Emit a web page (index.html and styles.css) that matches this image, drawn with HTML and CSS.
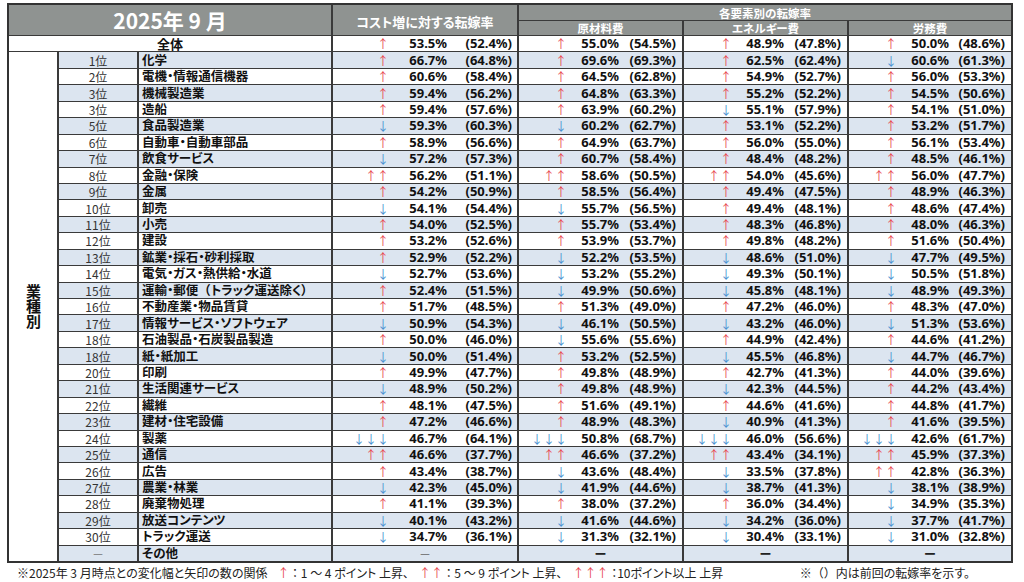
FILE: index.html
```html
<!DOCTYPE html>
<html lang="ja">
<head>
<meta charset="utf-8">
<title>2025年9月 転嫁率</title>
<link rel="stylesheet" href="styles.css">
</head>
<body>
<div class="page">
<div class="tbl">
<div class="h h-title">2025年 9 月</div>
<div class="h h-cost">コスト増に対する転嫁率</div>
<div class="h h-group">各要素別の転嫁率</div>
<div class="h h-sub">原材料費</div>
<div class="h h-sub">エネルギー費</div>
<div class="h h-sub">労務費</div>

<div class="all">全体</div>
<div class="v"><span class="a u">↑</span><span class="n">53.5%</span><span class="p">(52.4%)</span></div>
<div class="v s"><span class="a u">↑</span><span class="n">55.0%</span><span class="p">(54.5%)</span></div>
<div class="v s"><span class="a u">↑</span><span class="n">48.9%</span><span class="p">(47.8%)</span></div>
<div class="v s"><span class="a u">↑</span><span class="n">50.0%</span><span class="p">(48.6%)</span></div>

<div class="cat">業種別</div>

<div class="r b">1位</div><div class="nm b">化学</div>
<div class="v b"><span class="a u">↑</span><span class="n">66.7%</span><span class="p">(64.8%)</span></div>
<div class="v s b"><span class="a u">↑</span><span class="n">69.6%</span><span class="p">(69.3%)</span></div>
<div class="v s b"><span class="a u">↑</span><span class="n">62.5%</span><span class="p">(62.4%)</span></div>
<div class="v s b"><span class="a d">↓</span><span class="n">60.6%</span><span class="p">(61.3%)</span></div>

<div class="r">2位</div><div class="nm">電機・情報通信機器</div>
<div class="v"><span class="a u">↑</span><span class="n">60.6%</span><span class="p">(58.4%)</span></div>
<div class="v s"><span class="a u">↑</span><span class="n">64.5%</span><span class="p">(62.8%)</span></div>
<div class="v s"><span class="a u">↑</span><span class="n">54.9%</span><span class="p">(52.7%)</span></div>
<div class="v s"><span class="a u">↑</span><span class="n">56.0%</span><span class="p">(53.3%)</span></div>

<div class="r b">3位</div><div class="nm b">機械製造業</div>
<div class="v b"><span class="a u">↑</span><span class="n">59.4%</span><span class="p">(56.2%)</span></div>
<div class="v s b"><span class="a u">↑</span><span class="n">64.8%</span><span class="p">(63.3%)</span></div>
<div class="v s b"><span class="a u">↑</span><span class="n">55.2%</span><span class="p">(52.2%)</span></div>
<div class="v s b"><span class="a u">↑</span><span class="n">54.5%</span><span class="p">(50.6%)</span></div>

<div class="r">3位</div><div class="nm">造船</div>
<div class="v"><span class="a u">↑</span><span class="n">59.4%</span><span class="p">(57.6%)</span></div>
<div class="v s"><span class="a u">↑</span><span class="n">63.9%</span><span class="p">(60.2%)</span></div>
<div class="v s"><span class="a d">↓</span><span class="n">55.1%</span><span class="p">(57.9%)</span></div>
<div class="v s"><span class="a u">↑</span><span class="n">54.1%</span><span class="p">(51.0%)</span></div>

<div class="r b">5位</div><div class="nm b">食品製造業</div>
<div class="v b"><span class="a d">↓</span><span class="n">59.3%</span><span class="p">(60.3%)</span></div>
<div class="v s b"><span class="a d">↓</span><span class="n">60.2%</span><span class="p">(62.7%)</span></div>
<div class="v s b"><span class="a u">↑</span><span class="n">53.1%</span><span class="p">(52.2%)</span></div>
<div class="v s b"><span class="a u">↑</span><span class="n">53.2%</span><span class="p">(51.7%)</span></div>

<div class="r">6位</div><div class="nm">自動車・自動車部品</div>
<div class="v"><span class="a u">↑</span><span class="n">58.9%</span><span class="p">(56.6%)</span></div>
<div class="v s"><span class="a u">↑</span><span class="n">64.9%</span><span class="p">(63.7%)</span></div>
<div class="v s"><span class="a u">↑</span><span class="n">56.0%</span><span class="p">(55.0%)</span></div>
<div class="v s"><span class="a u">↑</span><span class="n">56.1%</span><span class="p">(53.4%)</span></div>

<div class="r b">7位</div><div class="nm b">飲食サービス</div>
<div class="v b"><span class="a d">↓</span><span class="n">57.2%</span><span class="p">(57.3%)</span></div>
<div class="v s b"><span class="a u">↑</span><span class="n">60.7%</span><span class="p">(58.4%)</span></div>
<div class="v s b"><span class="a u">↑</span><span class="n">48.4%</span><span class="p">(48.2%)</span></div>
<div class="v s b"><span class="a u">↑</span><span class="n">48.5%</span><span class="p">(46.1%)</span></div>

<div class="r">8位</div><div class="nm">金融・保険</div>
<div class="v"><span class="a u">↑↑</span><span class="n">56.2%</span><span class="p">(51.1%)</span></div>
<div class="v s"><span class="a u">↑↑</span><span class="n">58.6%</span><span class="p">(50.5%)</span></div>
<div class="v s"><span class="a u">↑↑</span><span class="n">54.0%</span><span class="p">(45.6%)</span></div>
<div class="v s"><span class="a u">↑↑</span><span class="n">56.0%</span><span class="p">(47.7%)</span></div>

<div class="r b">9位</div><div class="nm b">金属</div>
<div class="v b"><span class="a u">↑</span><span class="n">54.2%</span><span class="p">(50.9%)</span></div>
<div class="v s b"><span class="a u">↑</span><span class="n">58.5%</span><span class="p">(56.4%)</span></div>
<div class="v s b"><span class="a u">↑</span><span class="n">49.4%</span><span class="p">(47.5%)</span></div>
<div class="v s b"><span class="a u">↑</span><span class="n">48.9%</span><span class="p">(46.3%)</span></div>

<div class="r">10位</div><div class="nm">卸売</div>
<div class="v"><span class="a d">↓</span><span class="n">54.1%</span><span class="p">(54.4%)</span></div>
<div class="v s"><span class="a d">↓</span><span class="n">55.7%</span><span class="p">(56.5%)</span></div>
<div class="v s"><span class="a u">↑</span><span class="n">49.4%</span><span class="p">(48.1%)</span></div>
<div class="v s"><span class="a u">↑</span><span class="n">48.6%</span><span class="p">(47.4%)</span></div>

<div class="r b">11位</div><div class="nm b">小売</div>
<div class="v b"><span class="a u">↑</span><span class="n">54.0%</span><span class="p">(52.5%)</span></div>
<div class="v s b"><span class="a u">↑</span><span class="n">55.7%</span><span class="p">(53.4%)</span></div>
<div class="v s b"><span class="a u">↑</span><span class="n">48.3%</span><span class="p">(46.8%)</span></div>
<div class="v s b"><span class="a u">↑</span><span class="n">48.0%</span><span class="p">(46.3%)</span></div>

<div class="r">12位</div><div class="nm">建設</div>
<div class="v"><span class="a u">↑</span><span class="n">53.2%</span><span class="p">(52.6%)</span></div>
<div class="v s"><span class="a u">↑</span><span class="n">53.9%</span><span class="p">(53.7%)</span></div>
<div class="v s"><span class="a u">↑</span><span class="n">49.8%</span><span class="p">(48.2%)</span></div>
<div class="v s"><span class="a u">↑</span><span class="n">51.6%</span><span class="p">(50.4%)</span></div>

<div class="r b">13位</div><div class="nm b">鉱業・採石・砂利採取</div>
<div class="v b"><span class="a u">↑</span><span class="n">52.9%</span><span class="p">(52.2%)</span></div>
<div class="v s b"><span class="a d">↓</span><span class="n">52.2%</span><span class="p">(53.5%)</span></div>
<div class="v s b"><span class="a d">↓</span><span class="n">48.6%</span><span class="p">(51.0%)</span></div>
<div class="v s b"><span class="a d">↓</span><span class="n">47.7%</span><span class="p">(49.5%)</span></div>

<div class="r">14位</div><div class="nm">電気・ガス・熱供給・水道</div>
<div class="v"><span class="a d">↓</span><span class="n">52.7%</span><span class="p">(53.6%)</span></div>
<div class="v s"><span class="a d">↓</span><span class="n">53.2%</span><span class="p">(55.2%)</span></div>
<div class="v s"><span class="a d">↓</span><span class="n">49.3%</span><span class="p">(50.1%)</span></div>
<div class="v s"><span class="a d">↓</span><span class="n">50.5%</span><span class="p">(51.8%)</span></div>

<div class="r b">15位</div><div class="nm b">運輸・郵便<span class="fw">（</span>トラック運送除く）</div>
<div class="v b"><span class="a u">↑</span><span class="n">52.4%</span><span class="p">(51.5%)</span></div>
<div class="v s b"><span class="a d">↓</span><span class="n">49.9%</span><span class="p">(50.6%)</span></div>
<div class="v s b"><span class="a d">↓</span><span class="n">45.8%</span><span class="p">(48.1%)</span></div>
<div class="v s b"><span class="a d">↓</span><span class="n">48.9%</span><span class="p">(49.3%)</span></div>

<div class="r">16位</div><div class="nm">不動産業・物品賃貸</div>
<div class="v"><span class="a u">↑</span><span class="n">51.7%</span><span class="p">(48.5%)</span></div>
<div class="v s"><span class="a u">↑</span><span class="n">51.3%</span><span class="p">(49.0%)</span></div>
<div class="v s"><span class="a u">↑</span><span class="n">47.2%</span><span class="p">(46.0%)</span></div>
<div class="v s"><span class="a u">↑</span><span class="n">48.3%</span><span class="p">(47.0%)</span></div>

<div class="r b">17位</div><div class="nm b">情報サービス・ソフトウェア</div>
<div class="v b"><span class="a d">↓</span><span class="n">50.9%</span><span class="p">(54.3%)</span></div>
<div class="v s b"><span class="a d">↓</span><span class="n">46.1%</span><span class="p">(50.5%)</span></div>
<div class="v s b"><span class="a d">↓</span><span class="n">43.2%</span><span class="p">(46.0%)</span></div>
<div class="v s b"><span class="a d">↓</span><span class="n">51.3%</span><span class="p">(53.6%)</span></div>

<div class="r">18位</div><div class="nm">石油製品・石炭製品製造</div>
<div class="v"><span class="a u">↑</span><span class="n">50.0%</span><span class="p">(46.0%)</span></div>
<div class="v s"><span class="a d">↓</span><span class="n">55.6%</span><span class="p">(55.6%)</span></div>
<div class="v s"><span class="a u">↑</span><span class="n">44.9%</span><span class="p">(42.4%)</span></div>
<div class="v s"><span class="a u">↑</span><span class="n">44.6%</span><span class="p">(41.2%)</span></div>

<div class="r b">18位</div><div class="nm b">紙・紙加工</div>
<div class="v b"><span class="a d">↓</span><span class="n">50.0%</span><span class="p">(51.4%)</span></div>
<div class="v s b"><span class="a u">↑</span><span class="n">53.2%</span><span class="p">(52.5%)</span></div>
<div class="v s b"><span class="a d">↓</span><span class="n">45.5%</span><span class="p">(46.8%)</span></div>
<div class="v s b"><span class="a d">↓</span><span class="n">44.7%</span><span class="p">(46.7%)</span></div>

<div class="r">20位</div><div class="nm">印刷</div>
<div class="v"><span class="a u">↑</span><span class="n">49.9%</span><span class="p">(47.7%)</span></div>
<div class="v s"><span class="a u">↑</span><span class="n">49.8%</span><span class="p">(48.9%)</span></div>
<div class="v s"><span class="a u">↑</span><span class="n">42.7%</span><span class="p">(41.3%)</span></div>
<div class="v s"><span class="a u">↑</span><span class="n">44.0%</span><span class="p">(39.6%)</span></div>

<div class="r b">21位</div><div class="nm b">生活関連サービス</div>
<div class="v b"><span class="a d">↓</span><span class="n">48.9%</span><span class="p">(50.2%)</span></div>
<div class="v s b"><span class="a u">↑</span><span class="n">49.8%</span><span class="p">(48.9%)</span></div>
<div class="v s b"><span class="a d">↓</span><span class="n">42.3%</span><span class="p">(44.5%)</span></div>
<div class="v s b"><span class="a u">↑</span><span class="n">44.2%</span><span class="p">(43.4%)</span></div>

<div class="r">22位</div><div class="nm">繊維</div>
<div class="v"><span class="a u">↑</span><span class="n">48.1%</span><span class="p">(47.5%)</span></div>
<div class="v s"><span class="a u">↑</span><span class="n">51.6%</span><span class="p">(49.1%)</span></div>
<div class="v s"><span class="a u">↑</span><span class="n">44.6%</span><span class="p">(41.6%)</span></div>
<div class="v s"><span class="a u">↑</span><span class="n">44.8%</span><span class="p">(41.7%)</span></div>

<div class="r b">23位</div><div class="nm b">建材・住宅設備</div>
<div class="v b"><span class="a u">↑</span><span class="n">47.2%</span><span class="p">(46.6%)</span></div>
<div class="v s b"><span class="a u">↑</span><span class="n">48.9%</span><span class="p">(48.3%)</span></div>
<div class="v s b"><span class="a d">↓</span><span class="n">40.9%</span><span class="p">(41.3%)</span></div>
<div class="v s b"><span class="a u">↑</span><span class="n">41.6%</span><span class="p">(39.5%)</span></div>

<div class="r">24位</div><div class="nm">製薬</div>
<div class="v"><span class="a d">↓↓↓</span><span class="n">46.7%</span><span class="p">(64.1%)</span></div>
<div class="v s"><span class="a d">↓↓↓</span><span class="n">50.8%</span><span class="p">(68.7%)</span></div>
<div class="v s"><span class="a d">↓↓↓</span><span class="n">46.0%</span><span class="p">(56.6%)</span></div>
<div class="v s"><span class="a d">↓↓↓</span><span class="n">42.6%</span><span class="p">(61.7%)</span></div>

<div class="r b">25位</div><div class="nm b">通信</div>
<div class="v b"><span class="a u">↑↑</span><span class="n">46.6%</span><span class="p">(37.7%)</span></div>
<div class="v s b"><span class="a u">↑↑</span><span class="n">46.6%</span><span class="p">(37.2%)</span></div>
<div class="v s b"><span class="a u">↑↑</span><span class="n">43.4%</span><span class="p">(34.1%)</span></div>
<div class="v s b"><span class="a u">↑↑</span><span class="n">45.9%</span><span class="p">(37.3%)</span></div>

<div class="r">26位</div><div class="nm">広告</div>
<div class="v"><span class="a u">↑</span><span class="n">43.4%</span><span class="p">(38.7%)</span></div>
<div class="v s"><span class="a d">↓</span><span class="n">43.6%</span><span class="p">(48.4%)</span></div>
<div class="v s"><span class="a d">↓</span><span class="n">33.5%</span><span class="p">(37.8%)</span></div>
<div class="v s"><span class="a u">↑↑</span><span class="n">42.8%</span><span class="p">(36.3%)</span></div>

<div class="r b">27位</div><div class="nm b">農業・林業</div>
<div class="v b"><span class="a d">↓</span><span class="n">42.3%</span><span class="p">(45.0%)</span></div>
<div class="v s b"><span class="a d">↓</span><span class="n">41.9%</span><span class="p">(44.6%)</span></div>
<div class="v s b"><span class="a d">↓</span><span class="n">38.7%</span><span class="p">(41.3%)</span></div>
<div class="v s b"><span class="a d">↓</span><span class="n">38.1%</span><span class="p">(38.9%)</span></div>

<div class="r">28位</div><div class="nm">廃棄物処理</div>
<div class="v"><span class="a u">↑</span><span class="n">41.1%</span><span class="p">(39.3%)</span></div>
<div class="v s"><span class="a u">↑</span><span class="n">38.0%</span><span class="p">(37.2%)</span></div>
<div class="v s"><span class="a u">↑</span><span class="n">36.0%</span><span class="p">(34.4%)</span></div>
<div class="v s"><span class="a d">↓</span><span class="n">34.9%</span><span class="p">(35.3%)</span></div>

<div class="r b">29位</div><div class="nm b">放送コンテンツ</div>
<div class="v b"><span class="a d">↓</span><span class="n">40.1%</span><span class="p">(43.2%)</span></div>
<div class="v s b"><span class="a d">↓</span><span class="n">41.6%</span><span class="p">(44.6%)</span></div>
<div class="v s b"><span class="a d">↓</span><span class="n">34.2%</span><span class="p">(36.0%)</span></div>
<div class="v s b"><span class="a d">↓</span><span class="n">37.7%</span><span class="p">(41.7%)</span></div>

<div class="r">30位</div><div class="nm">トラック運送</div>
<div class="v"><span class="a d">↓</span><span class="n">34.7%</span><span class="p">(36.1%)</span></div>
<div class="v s"><span class="a d">↓</span><span class="n">31.3%</span><span class="p">(32.1%)</span></div>
<div class="v s"><span class="a d">↓</span><span class="n">30.4%</span><span class="p">(33.1%)</span></div>
<div class="v s"><span class="a d">↓</span><span class="n">31.0%</span><span class="p">(32.8%)</span></div>

<div class="r b dash-r">－</div><div class="nm b">その他</div>
<div class="dash b thin">－</div>
<div class="dash b">ー</div>
<div class="dash b">ー</div>
<div class="dash b">ー</div>
</div>

<div class="foot">
<span>※2025年 3 月時点との変化幅と矢印の数の関係</span>
<span class="leg"><span class="fu">↑</span> ： 1 ～ 4 ポイント 上昇、</span>
<span class="leg"><span class="fu">↑↑</span> ： 5 ～ 9 ポイント 上昇、</span>
<span class="leg"><span class="fu">↑↑↑</span> ：10ポイント以上 上昇</span>
<span class="note">※<span class="fw">（）</span>内は前回の転嫁率を示す。</span>
</div>
</div>
</body>
</html>
```

FILE: styles.css
```css
* { box-sizing: border-box; }
html, body { margin: 0; padding: 0; background: #fff; }
body {
  font-family: "Noto Sans CJK JP", "Noto Sans", sans-serif;
  color: #111;
}
.page { width: 1024px; padding: 3px 11px 0 7px; }

.tbl {
  display: grid;
  grid-template-columns: 48px 78px 192px 184px 163px 163px 162px;
  grid-template-rows: 15px 14px repeat(32, 1fr);
  gap: 1px 2px;
  width: 1006px;
  height: 560px;
  border: 2px solid #333;
  background: #3a3a3a;
}
.tbl > div {
  background: #fff;
  display: flex;
  align-items: center;
  min-width: 0;
  white-space: nowrap;
  line-height: 15px;
}
.tbl > .b { background: #dce5f0; }

.h { background: #8f9391 !important; color: #fff; font-weight: 700; justify-content: center; }
.h-title { grid-column: 1 / 4; grid-row: 1 / 3; font-size: 21px; line-height: 24px !important; }
.h-cost { grid-column: 4; grid-row: 1 / 3; font-size: 13px; padding-top: 3px; font-feature-settings: "palt"; }
.h-group { grid-column: 5 / 8; font-size: 11.5px; line-height: 14px !important; }
.h-sub { font-size: 11.5px; line-height: 14px !important; font-feature-settings: "palt"; }

.all { grid-column: 1 / 4; justify-content: center; font-weight: 700; font-size: 13px; }

.cat {
  grid-column: 1;
  grid-row: 4 / span 31;
  justify-content: center;
  writing-mode: vertical-rl;
  text-orientation: upright;
  font-weight: 700;
  font-size: 15px;
  line-height: 20px !important;
}

.r { justify-content: center; font-size: 12px; color: #333; }
.dash-r { color: #777; }
.nm {
  padding-left: 3px;
  font-family: "Noto Sans", "Noto Sans CJK JP", sans-serif;
  font-weight: 700;
  font-size: 12.5px;
  font-feature-settings: "palt";
}
.fw { font-feature-settings: normal; }

.v { font-family: "Noto Sans", sans-serif; font-weight: 700; font-size: 13px; }
.v .a {
  flex: none;
  width: 56px;
  text-align: right;
  font-family: "Noto Sans CJK JP", sans-serif;
  font-weight: 400;
  font-size: 12px;
}
.v .n { flex: none; width: 58px; text-align: right; }
.v .p { flex: 1; text-align: right; padding-right: 5px; }
.s .a { width: 48px; }
.s .n { width: 52px; }
.s .p { padding-right: 6px; }
.u, .fu { color: #e8474f; }
.d { color: #4a90d0; }

.dash { justify-content: center; font-weight: 700; font-size: 12px; color: #222; }
.thin { font-weight: 400; color: #666; }

.foot {
  display: flex;
  align-items: center;
  height: 19px;
  padding-left: 10px;
  font-size: 12px;
  line-height: 16px;
  color: #222;
  white-space: nowrap;
  font-feature-settings: "palt";
}
.leg { margin-left: 10px; }
.note { margin-left: auto; margin-right: 43px; }
```
